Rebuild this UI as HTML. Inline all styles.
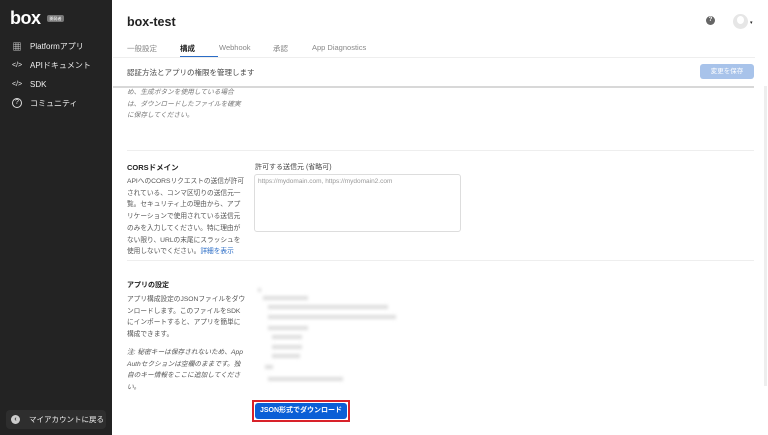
<!DOCTYPE html>
<html><head><meta charset="utf-8"><style>
*{margin:0;padding:0;box-sizing:border-box}
body{width:768px;height:435px;overflow:hidden;background:#fff;font-family:"Liberation Sans","Noto Sans CJK JP",sans-serif;position:relative;color:#222}
.sb{position:absolute;left:0;top:0;width:112px;height:435px;background:#232323;color:#fff}
.a{position:absolute}
.nav{position:absolute;left:12px;font-size:8px;color:#eee;display:flex;align-items:center;height:12px}
.nav span.i{width:10px;margin-right:8px;font-size:7px;text-align:center}
.t{font-size:6.7px;line-height:11.7px;color:#555;white-space:nowrap}
.blk{position:absolute;background:#ddd;filter:blur(1.5px);height:4px}
</style></head><body>
<div class="sb">
 <div class="a" style="left:10px;top:8px;font-size:18px;font-weight:bold;letter-spacing:-0.5px;color:#fff;line-height:20px">box</div>
 <div class="a" style="left:47px;top:15px;width:17px;height:7px;background:#777;border-radius:2px;font-size:4px;color:#fff;text-align:center;line-height:7px">開発者</div>
 <div class="nav" style="top:40px"><span class="i" style="font-size:9px">▦</span>Platformアプリ</div>
 <div class="nav" style="top:59px"><span class="i">&lt;/&gt;</span>APIドキュメント</div>
 <div class="nav" style="top:78px"><span class="i">&lt;/&gt;</span>SDK</div>
 <div class="nav" style="top:97px"><span class="i" style="border:1px solid #ddd;border-radius:50%;width:10px;height:10px;line-height:8px;font-size:7px">?</span>コミュニティ</div>
 <div class="a" style="left:6px;top:410px;width:100px;height:19px;background:#2e2e2e;border-radius:4px"></div>
 <div class="a" style="left:11px;top:415px;width:9px;height:9px;border-radius:50%;background:#ccc;color:#333;font-size:7px;line-height:9px;text-align:center;font-weight:bold">‹</div>
 <div class="a" style="left:29px;top:414px;font-size:7.5px;color:#eee">マイアカウントに戻る</div>
</div>
<div class="a" style="left:127px;top:15px;font-size:12.5px;font-weight:bold">box-test</div>
<div class="a" style="left:706px;top:16px;width:9px;height:9px;border-radius:50%;background:#666;color:#fff;font-size:6px;text-align:center;line-height:9px;font-weight:bold">?</div>
<div class="a" style="left:733px;top:14px;width:15px;height:15px;border-radius:50%;background:#e6e6e6"><div style="position:absolute;left:4px;top:2px;width:7px;height:8px;border-radius:50%;background:#fff"></div></div>
<div class="a" style="left:750px;top:20px;font-size:5px">▾</div>
<div class="a" style="left:127px;top:43px;font-size:7.5px;color:#888">一般設定</div>
<div class="a" style="left:180px;top:43px;font-size:7.5px;color:#222;font-weight:bold">構成</div>
<div class="a" style="left:180px;top:56px;width:38px;height:2px;background:#2a6cc6"></div>
<div class="a" style="left:219px;top:43px;font-size:7.5px;color:#888">Webhook</div>
<div class="a" style="left:273px;top:43px;font-size:7.5px;color:#888">承認</div>
<div class="a" style="left:312px;top:43px;font-size:7.5px;color:#888">App Diagnostics</div>
<div class="a" style="left:113px;top:57px;width:642px;height:1px;background:#eee"></div>
<div class="a" style="left:127px;top:67px;font-size:7.5px;color:#444">認証方法とアプリの権限を管理します</div>
<div class="a" style="left:700px;top:64px;width:54px;height:15px;background:#a8c3ea;border-radius:3px;color:#fff;font-size:6.5px;text-align:center;line-height:15px">変更を保存</div>
<div class="a" style="left:113px;top:86px;width:641px;height:2px;background:#d8d8d8"></div>
<div class="a" style="left:764px;top:86px;width:3px;height:300px;background:#eee"></div>
<div class="a t" style="left:127px;top:87px;font-style:italic;color:#777">め、生成ボタンを使用している場合<br>は、ダウンロードしたファイルを確実<br>に保存してください。</div>
<div class="a" style="left:127px;top:150px;width:627px;height:1px;background:#eee"></div>
<div class="a" style="left:127px;top:162px;font-size:7.5px;font-weight:bold">CORSドメイン</div>
<div class="a t" style="left:127px;top:176px">APIへのCORSリクエストの送信が許可<br>されている、コンマ区切りの送信元一<br>覧。セキュリティ上の理由から、アプ<br>リケーションで使用されている送信元<br>のみを入力してください。特に理由が<br>ない限り、URLの末尾にスラッシュを<br>使用しないでください。<span style="color:#2a6cc6">詳細を表示</span></div>
<div class="a" style="left:255px;top:162px;font-size:7px;color:#444">許可する送信元 (省略可)</div>
<div class="a" style="left:254px;top:174px;width:207px;height:58px;border:1px solid #ddd;border-radius:3px"></div>
<div class="a" style="left:258px;top:178px;font-size:6.5px;color:#999">https://mydomain.com, https://mydomain2.com</div>
<div class="a" style="left:127px;top:260px;width:627px;height:1px;background:#eee"></div>
<div class="a" style="left:127px;top:280px;font-size:7px;font-weight:bold">アプリの設定</div>
<div class="a t" style="left:127px;top:294px">アプリ構成設定のJSONファイルをダウ<br>ンロードします。このファイルをSDK<br>にインポートすると、アプリを簡単に<br>構成できます。</div>
<div class="a t" style="left:127px;top:347px;font-style:italic">注: 秘密キーは保存されないため、App<br>Authセクションは空欄のままです。独<br>自のキー情報をここに追加してくださ<br>い。</div>
<div class="blk" style="left:258px;top:288px;width:3px"></div>
<div class="blk" style="left:263px;top:296px;width:45px"></div>
<div class="blk" style="left:268px;top:305px;width:120px"></div>
<div class="blk" style="left:268px;top:315px;width:128px"></div>
<div class="blk" style="left:268px;top:326px;width:40px"></div>
<div class="blk" style="left:272px;top:335px;width:30px"></div>
<div class="blk" style="left:272px;top:345px;width:30px"></div>
<div class="blk" style="left:272px;top:354px;width:28px"></div>
<div class="blk" style="left:265px;top:365px;width:8px"></div>
<div class="blk" style="left:268px;top:377px;width:75px"></div>
<div class="a" style="left:252px;top:400px;width:98px;height:22px;border:2px solid #d8222a"></div>
<div class="a" style="left:255px;top:403px;width:92px;height:16px;background:#0b5fd6;border-radius:3px;color:#fff;font-size:7px;font-weight:bold;text-align:center;line-height:16px">JSON形式でダウンロード</div>
</body></html>
